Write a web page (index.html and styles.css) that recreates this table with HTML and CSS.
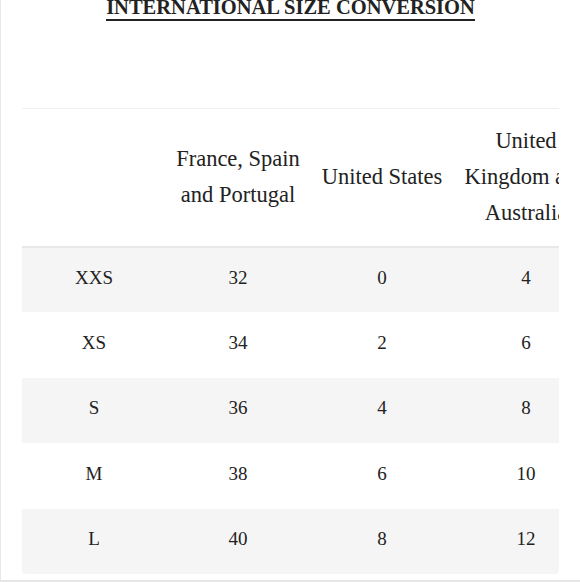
FILE: index.html
```html
<!DOCTYPE html>
<html>
<head>
<meta charset="utf-8">
<link rel="stylesheet" href="styles.css">
</head>
<body>
<div class="page">
  <div class="title-row"><h2 class="title">INTERNATIONAL SIZE CONVERSION</h2></div>
  <div class="table-wrap">
    <table class="sizes">
      <thead>
        <tr>
          <th></th>
          <th>France, Spain and Portugal</th>
          <th>United States</th>
          <th>United Kingdom and Australia</th>
        </tr>
      </thead>
      <tbody>
        <tr class="alt"><td>XXS</td><td>32</td><td>0</td><td>4</td></tr>
        <tr><td>XS</td><td>34</td><td>2</td><td>6</td></tr>
        <tr class="alt"><td>S</td><td>36</td><td>4</td><td>8</td></tr>
        <tr><td>M</td><td>38</td><td>6</td><td>10</td></tr>
        <tr class="alt"><td>L</td><td>40</td><td>8</td><td>12</td></tr>
      </tbody>
    </table>
  </div>
</div>
</body>
</html>
```
FILE: styles.css
```css
html, body {
  margin: 0;
  padding: 0;
  background: #fff;
}
body {
  overflow: hidden;
  font-family: "Liberation Serif", "Times New Roman", serif;
  color: #222;
}
.page {
  height: 580px;
  border-left: 1px solid #e8e8e8;
  border-bottom: 2px solid #e6e6e6;
  box-sizing: content-box;
  overflow: hidden;
}
.title-row {
  text-align: center;
  height: 108px;
}
.title {
  display: inline-block;
  margin: -3px 0 0 0;
  font-size: 20.5px;
  line-height: 20px;
  font-weight: bold;
  padding-bottom: 2px;
  border-bottom: 2px solid #222;
}
.table-wrap {
  margin-left: 21px;
  width: 537px;
  overflow: hidden;
  border-radius: 0 0 4px 4px;
}
.sizes {
  border-collapse: collapse;
  table-layout: fixed;
  width: 576px;
}
.sizes th {
  box-sizing: border-box;
  width: 144px;
  font-weight: normal;
  font-size: 22.5px;
  line-height: 36px;
  padding: 14px 6px 15px;
  text-align: center;
  vertical-align: middle;
  border-top: 1px solid #f0f0f0;
  border-bottom: 2px solid #e8e8e8;
}
.sizes td {
  box-sizing: border-box;
  height: 65.4px;
  padding: 0 0 4px;
  font-size: 19px;
  line-height: 24px;
  text-align: center;
  vertical-align: middle;
}
.sizes tr.alt td {
  background: #f5f5f5;
}
```
